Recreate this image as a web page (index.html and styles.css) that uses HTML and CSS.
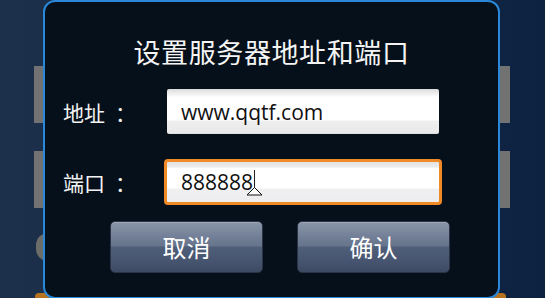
FILE: index.html
```html
<!DOCTYPE html>
<html>
<head>
<meta charset="utf-8">
<link rel="stylesheet" href="styles.css">
</head>
<body>
<div class="screen">
  <div class="backdrop">
    <div class="bg-bar bar-1"></div>
    <div class="bg-bar bar-2"></div>
    <div class="bg-pill"></div>
    <div class="bg-orange"></div>
  </div>

  <div class="dialog">
    <div class="title">设置服务器地址和端口</div>
    <div class="row row-addr">
      <div class="label">地址<span class="colon">：</span></div>
      <div class="field">www.qqtf.com</div>
    </div>
    <div class="row row-port">
      <div class="label">端口<span class="colon">：</span></div>
      <div class="field focused"><span class="value">888888</span><span class="caret"></span>
        <svg class="handle" width="17" height="9" viewBox="0 0 17 9"><polygon points="8.5,0.5 1,8 16,8" fill="#fff" stroke="#111" stroke-width="1"/></svg>
      </div>
    </div>
    <div class="buttons">
      <div class="btn">取消</div>
      <div class="btn">确认</div>
    </div>
  </div>
</div>
</body>
</html>
```

FILE: styles.css
```css
* { box-sizing: border-box; }
html, body { margin: 0; padding: 0; }
body {
  width: 545px;
  height: 298px;
  overflow: hidden;
  font-family: "Noto Sans CJK SC", "Open Sans", sans-serif;
}
.screen {
  position: relative;
  width: 545px;
  height: 298px;
  background: linear-gradient(90deg, #1c304b 0%, #16294a 50%, #0d2240 100%);
  overflow: hidden;
}
.backdrop {
  display: flex;
  flex-direction: column;
  padding-left: 34px;
  width: 511px;
}
.bg-bar {
  width: 476px;
  height: 57px;
  background: #727272;
}
.bar-1 { margin-top: 66px; }
.bar-2 { margin-top: 28px; }
.bg-pill {
  margin-top: 25px;
  margin-left: 2px;
  width: 200px;
  height: 28px;
  border-radius: 12px;
  background: #6c6c68;
}
.bg-orange {
  margin-top: 32px;
  margin-left: 1px;
  width: 471px;
  height: 12px;
  border-radius: 4px;
  background: #b5731f;
}
.dialog {
  position: absolute;
  left: 43px;
  top: 0;
  width: 457px;
  height: 299px;
  border: 2px solid #2b88d9;
  border-radius: 12px;
  background: #06101a;
  display: flex;
  flex-direction: column;
  padding-top: 32px;
}
.title {
  height: 36px;
  line-height: 36px;
  text-align: center;
  color: #f4f4f4;
  font-size: 27px;
  letter-spacing: 0.6px;
}
.row {
  display: flex;
  align-items: center;
  padding-left: 18px;
}
.row-addr { margin-top: 19px; }
.row-port { margin-top: 25px; }
.label {
  width: 104px;
  color: #f2f2f2;
  font-size: 21px;
  line-height: 28px;
  white-space: nowrap;
}
.colon { margin-left: 10px; }
.field {
  position: relative;
  width: 272px;
  height: 45px;
  padding-left: 14px;
  display: flex;
  align-items: center;
  font-family: "Open Sans", "Noto Sans CJK SC", sans-serif;
  font-size: 21px;
  color: #111;
  border-radius: 2px;
  background: linear-gradient(180deg, #d9d9d9 0px, #e9e9e9 3px, #f4f4f4 6px, #ffffff 8px, #ffffff 31px, #efefef 32px, #eaeaea 44px, #d4d4d4 45px);
}
.field.focused {
  margin-left: -3px;
  width: 278px;
  height: 46px;
  padding-left: 14px;
  border: 3px solid #f08a26;
  border-radius: 4px;
  background: linear-gradient(180deg, #e4e4e4 0px, #ebebeb 5px, #ffffff 6px, #ffffff 26px, #f0f0f2 27px, #ededee 100%);
}
.value { line-height: 24px; }
.caret {
  display: block;
  width: 1px;
  height: 21px;
  margin-left: 1px;
  background: #222;
  margin-top: -4px;
}
.handle {
  position: absolute;
  left: 79px;
  top: 25px;
}
.buttons {
  display: flex;
  gap: 34px;
  padding-left: 65px;
  margin-top: 16px;
}
.btn {
  width: 153px;
  height: 52px;
  border-radius: 5px;
  border: 1px solid #2a3446;
  background: linear-gradient(180deg, #8a95a8 0px, #76839a 12px, #66748c 24px, #4f5e79 25px, #46546f 40px, #3d4a63 100%);
  box-shadow: inset 0 1px 0 rgba(255,255,255,0.18);
  color: #ffffff;
  font-size: 24px;
  line-height: 50px;
  text-align: center;
}
```
